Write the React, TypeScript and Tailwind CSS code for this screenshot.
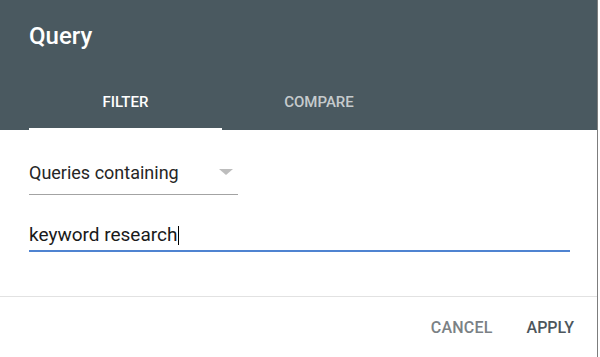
import React from "react";

export default function App() {
  return (
    <div className="flex h-[357px] w-[600px] bg-white font-['Roboto',sans-serif]">
      <div className="flex w-[598px] flex-col border-r border-[#7d7d7d]">
        <div className="flex h-[130px] flex-col bg-[#4a5960] px-[29px]">
          <div className="pt-[20px] text-[24px] font-medium leading-8 text-white">Query</div>
          <div className="mt-[40px] flex">
            <div className="flex h-[38px] w-[193px] flex-col">
              <div className="text-center text-[15px] font-medium leading-5 text-white">FILTER</div>
              <div className="flex-1" />
              <div className="h-[2px] bg-white" />
            </div>
            <div className="flex h-[38px] w-[194px] flex-col">
              <div className="text-center text-[15px] font-medium leading-5 text-white/70">COMPARE</div>
            </div>
          </div>
        </div>
        <div className="flex h-[167px] flex-col border-b border-[#e2e2e2] px-[29px]">
          <div className="mt-[31px] flex w-[209px] items-center justify-between border-b border-[#a3a3a3] pb-[9px] pr-[5px]">
            <span className="text-[18px] leading-6 text-[#262626]">Queries containing</span>
            <span className="mt-[-2px] h-0 w-0 border-l-[7px] border-r-[7px] border-t-[6px] border-l-transparent border-r-transparent border-t-[#bdbdbd]" />
          </div>
          <div className="mt-[28px] flex w-[541px] items-center border-b-2 border-[#4f83d1] pb-[3px]">
            <span className="text-[19px] leading-6 text-[#1a1a1a]">keyword research</span>
            <span className="ml-[1px] h-[19px] w-px bg-black" />
          </div>
        </div>
        <div className="flex flex-1 justify-end gap-[34px] pr-[23px] pt-[21px]">
          <span className="text-[16px] font-medium leading-5 tracking-[0.2px] text-[#7b8185]">CANCEL</span>
          <span className="text-[16px] font-medium leading-5 text-[#4d565c]">APPLY</span>
        </div>
      </div>
    </div>
  );
}
